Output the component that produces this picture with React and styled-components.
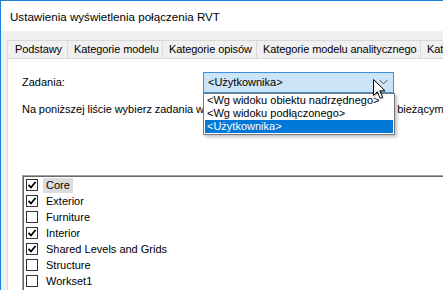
import React from "react";
import styled, { createGlobalStyle } from "styled-components";

const Global = createGlobalStyle`
  html, body { margin: 0; padding: 0; background: #f0f0f0; }
  body { font-family: "Liberation Sans", Arial, sans-serif; font-size: 11px; color: #000; }
  * { box-sizing: border-box; }
`;

const Window = styled.div`
  width: 443px;
  height: 290px;
  overflow: hidden;
  border-top: 1px solid #1a7ed6;
  border-left: 1px solid #1a7ed6;
  background: #f0f0f0;
  display: flex;
  flex-direction: column;
`;

const TitleBar = styled.div`
  height: 30px;
  flex-shrink: 0;
  background: #fff;
  display: flex;
  align-items: center;
  padding-left: 9px;
  padding-top: 1px;
  font-size: 11.6px;
  white-space: nowrap;
`;

const Body = styled.div`
  flex: 1;
  padding: 9px 0 0 6px;
  display: flex;
  flex-direction: column;
  min-height: 0;
`;

const TabStrip = styled.div`
  display: flex;
  height: 18px;
  flex-shrink: 0;
  white-space: nowrap;
`;

const Tab = styled.div`
  width: ${(p) => p.$w}px;
  flex-shrink: 0;
  border: 1px solid #d9d9d9;
  border-bottom: none;
  margin-left: -1px;
  &:first-child { margin-left: 0; }
  background: #f0f0f0;
  display: flex;
  align-items: center;
  padding-left: ${(p) => p.$pl}px;
  padding-bottom: 1px;
  font-size: 11px;
  letter-spacing: -0.1px;
`;

const Panel = styled.div`
  flex: 1;
  background: #fff;
  border-top: 1px solid #d9d9d9;
  border-left: 1px solid #d9d9d9;
  padding: 13px 0 0 14px;
  display: flex;
  flex-direction: column;
  white-space: nowrap;
`;

const FieldRow = styled.div`
  display: flex;
  align-items: center;
  height: 21px;
  position: relative;
  z-index: 2;
`;

const Label = styled.div`
  width: 181px;
  flex-shrink: 0;
  padding-bottom: 2px;
`;

const ComboWrap = styled.div`
  position: relative;
  width: 191px;
  height: 21px;
`;

const Combo = styled.div`
  height: 21px;
  background: #cce4f7;
  border: 1px solid #3c8fd8;
  display: flex;
  align-items: center;
  justify-content: space-between;
  padding: 0 0 1px 4px;
`;

const Chevron = styled.svg`
  width: 9px;
  height: 6px;
  margin-right: 5px;
  margin-top: -1px;
`;

const DropList = styled.div`
  position: absolute;
  left: 0;
  top: 21px;
  width: 192px;
  border: 1px solid #7a7a7a;
  background: #fff;
  padding: 0 1px 1px 1px;
  box-shadow: 2px 2px 3px rgba(0, 0, 0, 0.25);
`;

const DropItem = styled.div`
  height: 13px;
  line-height: 13px;
  padding-left: 2px;
  background: ${(p) => (p.$sel ? "#0078d7" : "transparent")};
  color: ${(p) => (p.$sel ? "#fff" : "#000")};
`;

const Cursor = styled.svg`
  position: absolute;
  left: 169px;
  top: 6px;
  width: 15px;
  height: 22px;
  overflow: visible;
`;

const Hint = styled.div`
  margin-top: 9px;
  height: 15px;
  line-height: 15px;
  position: relative;
  z-index: 1;
  word-spacing: -0.3px;
`;

const ListBox = styled.div`
  margin-top: 58px;
  flex: 1;
  border-top: 1px solid #a0a0a0;
  border-left: 1px solid #a0a0a0;
  box-shadow: inset 1px 1px 0 #696969;
  padding: 1px 0 0 3px;
  display: flex;
  flex-direction: column;
`;

const Row = styled.div`
  height: 16px;
  display: flex;
  align-items: center;
`;

const Box = styled.div`
  width: 12px;
  height: 12px;
  border: 1px solid #333;
  background: #fff;
  margin-right: 8px;
  display: flex;
  align-items: center;
  justify-content: center;
`;

const ItemText = styled.span`
  padding: 1px 3px 2px 3px;
  margin-left: -3px;
  background: ${(p) => (p.$focus ? "#dcdcdc" : "transparent")};
`;

const Check = () => (
  <svg width="10" height="10" viewBox="0 0 10 10">
    <polyline points="1.5,4.8 4,7.5 8.5,2" fill="none" stroke="#000" strokeWidth="1.8" />
  </svg>
);

const tabs = [
  { t: "Podstawy", w: 61, pl: 7 },
  { t: "Kategorie modelu", w: 96, pl: 6 },
  { t: "Kategorie opisów", w: 95, pl: 6 },
  { t: "Kategorie modelu analitycznego", w: 165, pl: 6 },
  { t: "Kategorie importu", w: 100, pl: 6 },
];

const items = [
  { n: "Core", c: true, f: true },
  { n: "Exterior", c: true },
  { n: "Furniture", c: false },
  { n: "Interior", c: true },
  { n: "Shared Levels and Grids", c: true },
  { n: "Structure", c: false },
  { n: "Workset1", c: false },
];

export default function App() {
  return (
    <>
      <Global />
      <Window>
        <TitleBar>Ustawienia wyświetlenia połączenia RVT</TitleBar>
        <Body>
          <TabStrip>
            {tabs.map((t) => (
              <Tab key={t.t} $w={t.w} $pl={t.pl}>
                {t.t}
              </Tab>
            ))}
          </TabStrip>
          <Panel>
            <FieldRow>
              <Label>Zadania:</Label>
              <ComboWrap>
                <Combo>
                  <span>&lt;Użytkownika&gt;</span>
                  <Chevron viewBox="0 0 9 6">
                    <polyline points="0.5,0.8 4.5,4.8 8.5,0.8" fill="none" stroke="#555" strokeWidth="1" />
                  </Chevron>
                </Combo>
                <DropList>
                  <DropItem>&lt;Wg widoku obiektu nadrzędnego&gt;</DropItem>
                  <DropItem>&lt;Wg widoku podłączonego&gt;</DropItem>
                  <DropItem $sel>&lt;Użytkownika&gt;</DropItem>
                </DropList>
                <Cursor viewBox="0 0 15 22">
                  <path
                    d="M1.5,1.5 L1.5,17.5 L5.3,13.8 L8.2,20.3 L10.6,19.2 L7.8,12.8 L13,12.8 Z"
                    fill="rgba(0,0,0,0.25)"
                    transform="translate(1.2,1.2)"
                  />
                  <path
                    d="M1.5,1.5 L1.5,17.5 L5.3,13.8 L8.2,20.3 L10.6,19.2 L7.8,12.8 L13,12.8 Z"
                    fill="#fff"
                    stroke="#000"
                    strokeWidth="1"
                    strokeLinejoin="miter"
                  />
                </Cursor>
              </ComboWrap>
            </FieldRow>
            <Hint>Na poniższej liście wybierz zadania w połączonym modelu do wyświetlenia w bieżącym widoku.</Hint>
            <ListBox>
              {items.map((it) => (
                <Row key={it.n}>
                  <Box>{it.c && <Check />}</Box>
                  <ItemText $focus={it.f}>{it.n}</ItemText>
                </Row>
              ))}
            </ListBox>
          </Panel>
        </Body>
      </Window>
    </>
  );
}
